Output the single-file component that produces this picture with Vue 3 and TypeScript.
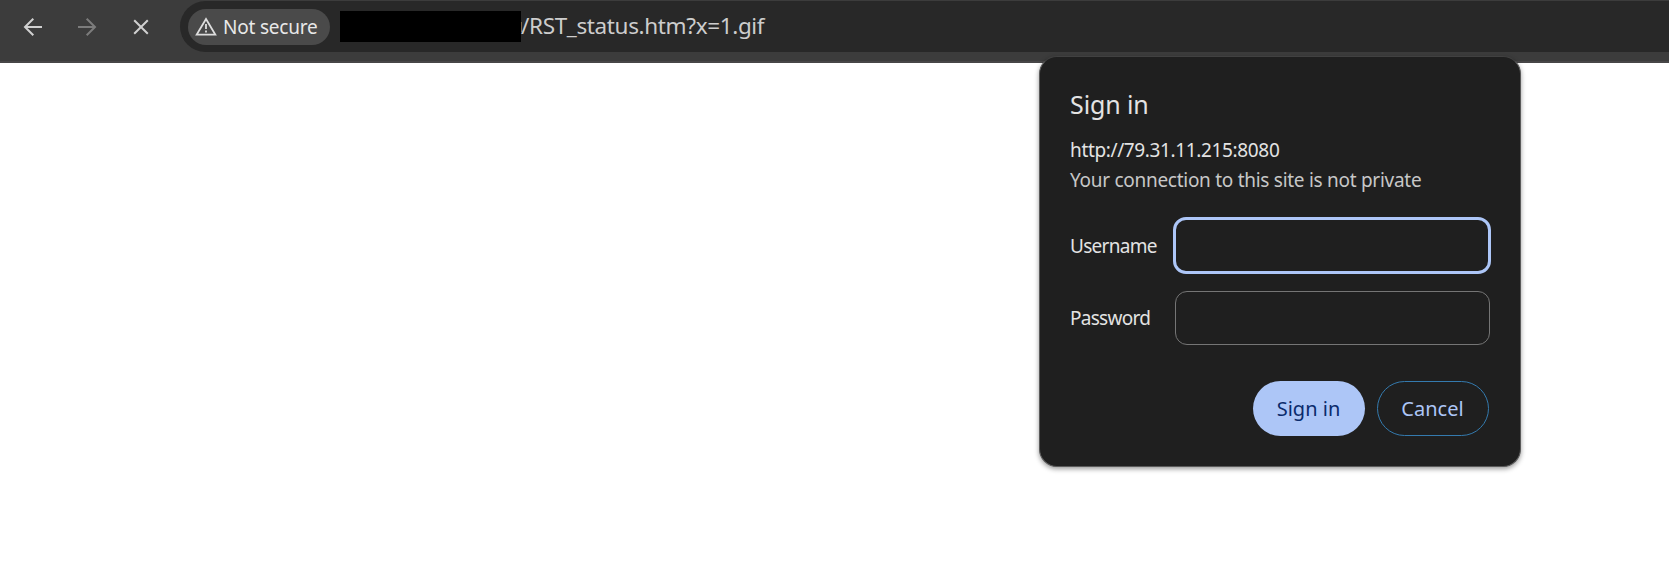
<script setup lang="ts">
import { ref } from 'vue'

const username = ref('')
const password = ref('')
const path = '/RST_status.htm?x=1.gif'
</script>

<template>
  <div class="browser">
    <header class="toolbar">
      <nav class="nav">
        <svg class="icon" viewBox="0 0 20 20"><path d="M19 10H2M10.3 1.7L2 10l8.3 8.3" /></svg>
        <svg class="icon dim" viewBox="0 0 20 20"><path d="M1 10h17M9.7 1.7L18 10l-8.3 8.3" /></svg>
        <svg class="icon stop" viewBox="0 0 20 20"><path d="M3.2 3.2l13.6 13.6M16.8 3.2L3.2 16.8" /></svg>
      </nav>
      <div class="omnibox">
        <div class="chip">
          <svg class="warn" viewBox="0 0 22 19"><path d="M11 2L20.3 17.6H1.7z" /><path d="M11 7v5M11 13.5v2" /></svg>
          <span class="chip-text">Not secure</span>
        </div>
        <div class="redacted"></div>
        <div class="sliver"></div>
        <span class="path">{{ path }}</span>
      </div>
    </header>

    <form class="dialog" @submit.prevent>
      <h1 class="title">Sign in</h1>
      <p class="origin">http://79.31.11.215:8080</p>
      <p class="notice">Your connection to this site is not private</p>
      <div class="row first">
        <label for="user">Username</label>
        <input id="user" v-model="username" class="field focused" type="text" />
      </div>
      <div class="row">
        <label for="pass">Password</label>
        <input id="pass" v-model="password" class="field" type="password" />
      </div>
      <div class="actions">
        <button class="btn primary" type="submit">Sign in</button>
        <button class="btn" type="button">Cancel</button>
      </div>
    </form>
  </div>
</template>

<style>
html,
body {
  margin: 0;
  background: #fff;
}
</style>

<style scoped>
.browser {
  position: relative;
  height: 574px;
  overflow: hidden;
  background: #fff;
  font-family: 'Noto Sans', 'Open Sans', sans-serif;
}
.toolbar {
  box-sizing: border-box;
  display: flex;
  height: 63px;
  padding-top: 1px;
  background: #3c3c3c;
  border-bottom: 2px solid #474647;
}
.nav {
  display: flex;
  flex: none;
  align-items: center;
  gap: 34px;
  width: 157px;
  height: 51px;
  padding-left: 23px;
}
.icon {
  flex: none;
  width: 20px;
  height: 20px;
  fill: none;
  stroke: #d0d0d0;
  stroke-width: 2;
}
.icon.dim {
  stroke: #7c7c7c;
}
.omnibox {
  display: flex;
  flex: 1;
  align-items: center;
  height: 51px;
  background: #282828;
  border-radius: 26px 0 0 26px;
  white-space: nowrap;
}
.chip {
  box-sizing: border-box;
  display: flex;
  flex: none;
  align-items: center;
  width: 142px;
  height: 36px;
  margin-left: 8px;
  padding-left: 7px;
  background: #4a4a4a;
  border-radius: 18px;
}
.warn {
  flex: none;
  width: 22px;
  height: 19px;
  fill: none;
  stroke: #dedede;
  stroke-width: 1.8;
}
.chip-text {
  margin-left: 6px;
  color: #e8e8e8;
  font-size: 19px;
  letter-spacing: -0.2px;
  line-height: 36px;
}
.redacted {
  flex: none;
  width: 181px;
  height: 31px;
  margin-left: 10px;
  background: #000;
}
.sliver {
  flex: none;
  width: 1px;
  height: 10px;
  margin-right: -1px;
  background: #7b6548;
}
.path {
  margin-top: -2px;
  color: #cdcdcd;
  font-size: 22.5px;
  letter-spacing: -0.36px;
  line-height: 51px;
}
.dialog {
  position: absolute;
  top: 56px;
  left: 1039px;
  box-sizing: border-box;
  width: 482px;
  height: 411px;
  padding: 27px 30px 0;
  background: #1f1f1f;
  border: 1px solid #5a5a5a;
  border-top-color: #414141;
  border-radius: 18px;
  box-shadow: 0 2px 5px rgba(0, 0, 0, 0.4);
  color: #e3e3e3;
  white-space: nowrap;
}
.title {
  margin: 0;
  font-size: 25px;
  font-weight: 400;
  letter-spacing: -0.1px;
  line-height: 40px;
}
.origin,
.notice {
  margin: 0;
  font-size: 19px;
  line-height: 30px;
}
.origin {
  margin-top: 11px;
  letter-spacing: -0.36px;
}
.notice {
  color: #c7c7c7;
  letter-spacing: -0.28px;
}
.row {
  display: flex;
  align-items: center;
  justify-content: space-between;
  height: 54px;
  margin-top: 18px;
  font-size: 19px;
  letter-spacing: -0.72px;
}
.row.first {
  height: 57px;
  margin-top: 22px;
}
.row + .row {
  margin-top: 17px;
}
.field {
  box-sizing: border-box;
  width: 315px;
  height: 54px;
  padding: 0 14px;
  background: transparent;
  border: 1px solid #757575;
  border-radius: 12px;
  outline: none;
  color: #e3e3e3;
  font: inherit;
}
.field.focused {
  width: 318px;
  height: 57px;
  margin-right: -1px;
  border: 3px solid #adc6f7;
  border-radius: 13px;
}
.actions {
  display: flex;
  justify-content: flex-end;
  gap: 12px;
  margin: 36px 1px 0 0;
}
.btn {
  box-sizing: border-box;
  width: 112px;
  height: 55px;
  padding: 0 1px 0 0;
  background: transparent;
  border: 1.5px solid #347aae;
  border-radius: 28px;
  color: #adc6f7;
  font-family: inherit;
  font-size: 20px;
}
.btn.primary {
  background: #adc6f7;
  border: 0;
  color: #0a2b6c;
}
</style>
